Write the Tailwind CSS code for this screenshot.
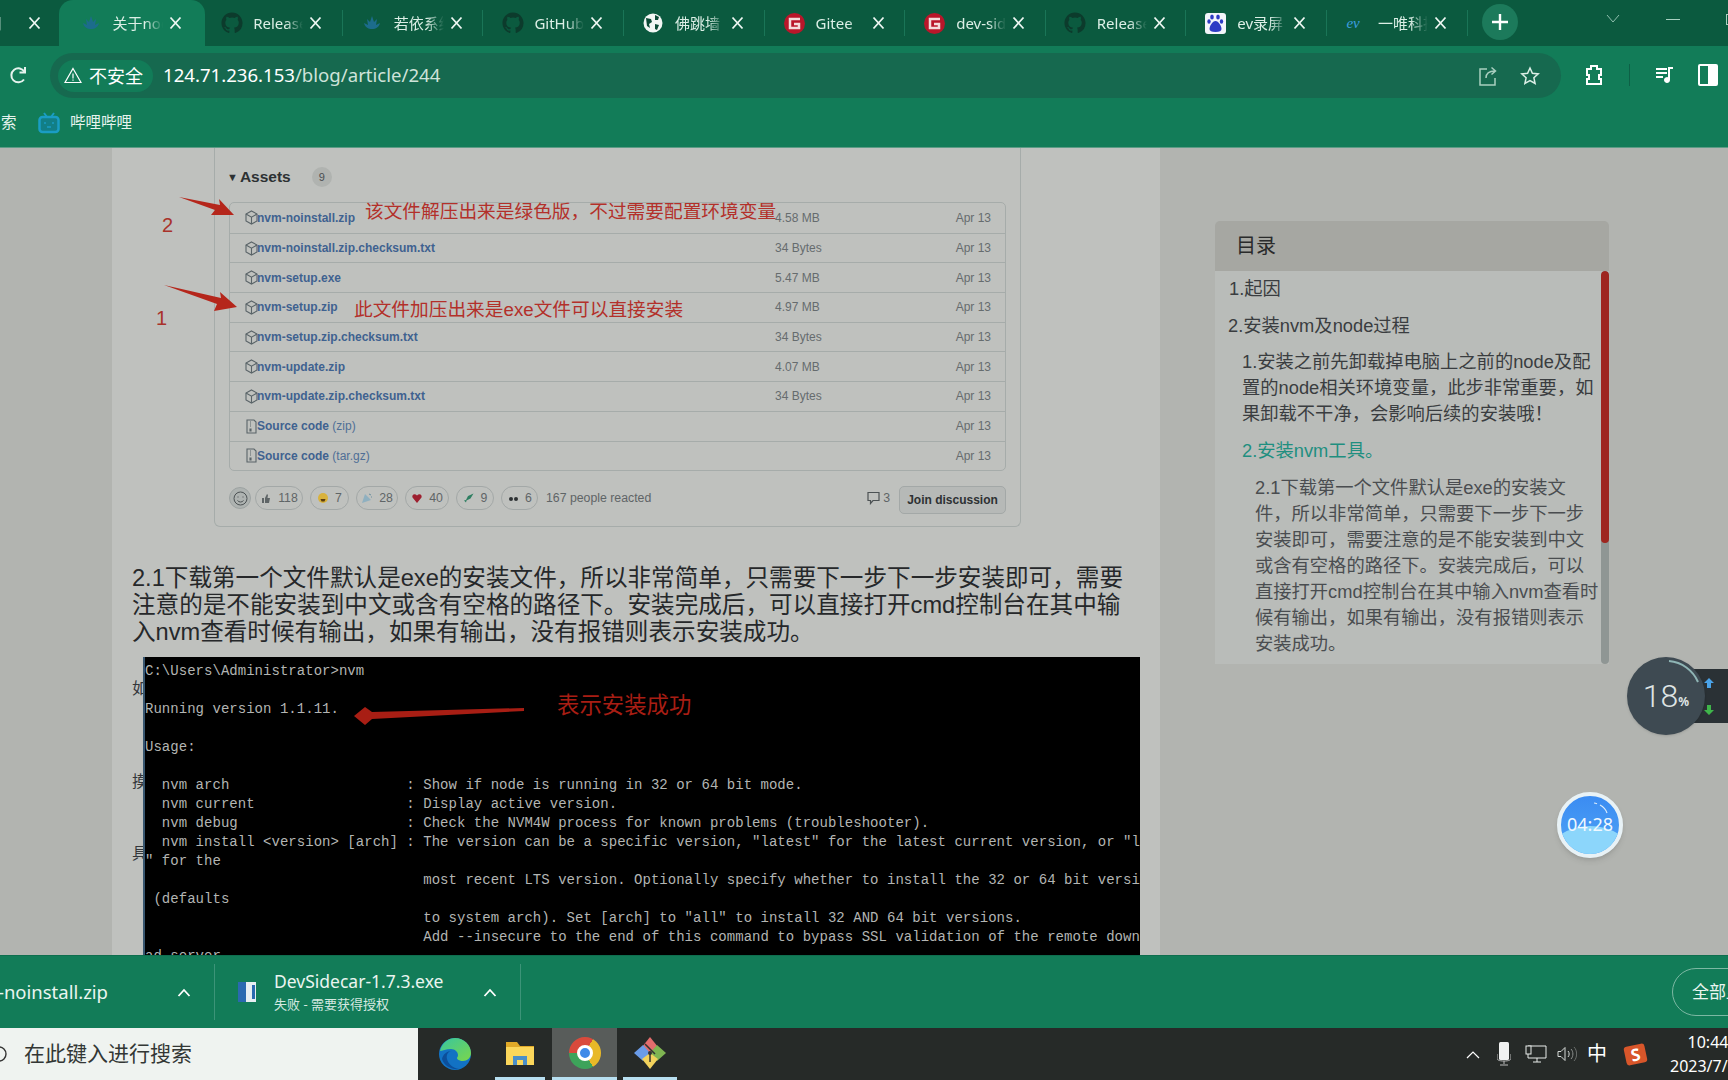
<!DOCTYPE html>
<html lang="zh-CN">
<head>
    <meta charset="UTF-8">
    <meta name="viewport" content="width=device-width, initial-scale=1.0">
    <title>关于nvm</title>
    <script src="https://cdn.jsdelivr.net/npm/@tailwindcss/browser@4"></script>
</head>
<body class="bg-[#b2b4b0]">
<div class="relative w-[1728px] h-[1080px] overflow-hidden flex flex-col [font-family:'Noto_Sans','Noto_Sans_CJK_SC',sans-serif]">

    <!-- Tab strip -->
    <div class="h-[46px] shrink-0 flex bg-[#0b5a3f] text-[#dcefe6] text-[15px]">
        <div id="tabs" class="flex ml-[-79px] shrink-0"></div>
        <div class="ml-[14px] mt-[4px] w-[36px] h-[36px] shrink-0 rounded-full bg-[#1c7a5b] flex items-center justify-center">
            <svg width="18" height="18" viewBox="0 0 18 18" stroke="#fff" stroke-width="2.4"><path d="M9 1v16M1 9h16"/></svg>
        </div>
        <svg class="ml-[88px] mt-[14px] shrink-0" width="14" height="10" viewBox="0 0 14 10" fill="none" stroke="#8fbfae" stroke-width="1"><path d="M1 1l6 7 6-7"/></svg>
        <div class="ml-[46px] mt-[19px] w-[14px] h-[1px] shrink-0 bg-[#a8d0c0]"></div>
        <div class="ml-[46px] mt-[14px] w-[14px] h-[11px] shrink-0 border border-[#a8d0c0]"></div>
    </div>

    <!-- Toolbar -->
    <div class="h-[52px] shrink-0 flex items-end bg-[#127c58] text-white">
        <svg class="ml-[9px] mb-[13px] shrink-0" width="18" height="20" viewBox="0 0 18 20" fill="none" stroke="#e6f3ee" stroke-width="2"><path d="M15 14.5a7 7 0 1 1 .5-7.5"/><path d="M16 2v5.5h-5.500" /></svg>
        <div class="ml-[23px] w-[1511px] h-[45px] shrink-0 rounded-full bg-[#16694f] flex items-center">
            <div class="ml-[8px] w-[95px] h-[32px] rounded-full bg-[#127c58] flex items-center pl-[6px] gap-[7px]">
                <svg width="18" height="17" viewBox="0 0 18 17" fill="none" stroke="#fff" stroke-width="1.200"><path d="M9 1.500L17 15.500H1z"/><path d="M9 6.500v5M9 12.500v1.200"/></svg>
                <span class="text-[18px] leading-none">不安全</span>
            </div>
            <span class="ml-[10px] text-[18.600px] leading-none">124.71.236.153<span class="text-[#cfe3da]">/blog/article/244</span></span>
            <svg class="ml-auto" width="20" height="22" viewBox="0 0 20 22" fill="none" stroke="#a9cfc0" stroke-width="1.500"><path d="M9 4H2v16h15v-7"/><path d="M8 13c0-5 3-7 9-7M13.500 2.500L17.500 6l-4 3.500"/></svg>
            <svg class="ml-[22px] mr-[21px]" width="20" height="20" viewBox="0 0 20 20" fill="none" stroke="#dcefe6" stroke-width="1.500"><path d="M10 2l2.400 5.300 5.800.6-4.300 3.900 1.200 5.700L10 14.600 4.900 17.500l1.200-5.700L1.800 7.900l5.800-.6z"/></svg>
        </div>
        <svg class="ml-[23px] mb-[12px] shrink-0" width="20" height="22" viewBox="0 0 20 22" fill="none" stroke="#fff" stroke-width="2"><path d="M3 5h4V2h6v3h4v6h-2v4h2v5H3v-5h2v-4H3z"/></svg>
        <div class="ml-[25px] mb-[12px] w-[1px] h-[22px] shrink-0 bg-[#0d6046]"></div>
        <svg class="ml-[26px] mb-[14px] shrink-0" width="18" height="18" viewBox="0 0 18 18" fill="#fff"><path d="M0 2h11v2H0zM0 6h11v2H0zM0 10h7v2H0z"/><path d="M12 1h5v2h-3v11a3 3 0 1 1-2-2.800z"/></svg>
        <div class="ml-[24px] mb-[12px] w-[20px] h-[22px] shrink-0 rounded-[2px] border-[2px] border-white flex justify-end">
            <div class="w-[8px] bg-white"></div>
        </div>
    </div>

    <!-- Bookmarks bar -->
    <div class="h-[50px] shrink-0 flex items-center bg-[#127c58] text-[#e6f3ee] text-[15.500px] border-b border-[#5c9c86]">
        <span class="ml-[1px] w-[16px]">索</span>
        <svg class="ml-[21px]" width="22" height="22" viewBox="0 0 22 22" fill="none"><path d="M6 1l3 4M16 1l-3 4" stroke="#1a9dc4" stroke-width="2"/><rect x="1.500" y="5" width="19" height="15" rx="3" fill="#127f86" stroke="#1a9dc4" stroke-width="2.500"/><path d="M7 10v2M15 10v2M9 15h4" stroke="#1a9dc4" stroke-width="1.500"/></svg>
        <span class="ml-[10px]">哔哩哔哩</span>
    </div>

    <!-- Page area -->
    <div class="h-[807px] shrink-0 flex overflow-hidden bg-[#b2b4b0] [font-family:'Liberation_Sans','Noto_Sans_CJK_SC',sans-serif]">
        <div class="ml-[112px] w-[1048px] shrink-0 bg-[#bfc1be]">
            <!-- Release card -->
            <div class="ml-[102px] w-[807px] h-[379px] border-x border-b border-[#a6acaa] rounded-b-[6px] px-[14px] pt-[17px]">
                <div class="h-[24px] flex items-center text-[#2d3133]">
                    <span class="text-[11px] ml-[-2px] mr-[2px]">▼</span>
                    <span class="text-[15.500px] font-semibold">Assets</span>
                    <span class="ml-[21px] w-[20px] h-[20px] rounded-full bg-[#b0b3b0] text-[11px] flex items-center justify-center text-[#4a4f50]">9</span>
                </div>
                <div id="assets" class="mt-[13px] border border-[#a6acaa] rounded-[5px]"></div>
                <div class="mt-[13px] h-[28px] flex items-center text-[12.300px] text-[#5f6567]">
                    <div class="w-[22px] h-[22px] rounded-full bg-[#aeb3b1] border border-[#9da3a2] flex items-center justify-center mr-[4px]">
                        <svg width="15" height="15" viewBox="0 0 15 15" fill="none" stroke="#4c5254"><circle cx="7.500" cy="7.500" r="6.500"/><path d="M4.500 9.500c1.500 2 4.500 2 6 0M5 5.500v1M10 5.500v1"/></svg>
                    </div>
                    <div id="reactions" class="flex gap-[7px]"></div>
                    <span class="ml-[8px] whitespace-nowrap">167 people reacted</span>
                    <svg class="ml-auto" width="13" height="14" viewBox="0 0 13 14" fill="none" stroke="#4c5254" stroke-width="1.200"><path d="M1 1.500h11v8H6l-2.500 3v-3H1z"/></svg>
                    <span class="ml-[3px] mr-[9px]">3</span>
                    <div class="mt-[4px] w-[107px] h-[28px] rounded-[5px] bg-[#b6b9b7] border border-[#a3a8a7] flex items-center justify-center font-semibold text-[12px] text-[#2d3133] whitespace-nowrap">Join discussion</div>
                </div>
            </div>

            <p class="mt-[38px] ml-[20px] text-[23.600px] leading-[27px] text-[#26282a] whitespace-nowrap">
                2.1下载第一个文件默认是exe的安装文件，所以非常简单，只需要下一步下一步安装即可，需要<br>
                注意的是不能安装到中文或含有空格的路径下。安装完成后，可以直接打开cmd控制台在其中输<br>
                入nvm查看时候有输出，如果有输出，没有报错则表示安装成功。
            </p>

            <!-- Terminal screenshot -->
            <pre class="mt-[11px] ml-[31px] w-[997px] h-[310px] overflow-hidden bg-black border-l-2 border-[#38566f] pt-[5px] text-[14px] leading-[19px] tracking-[0.030px] text-[#b3b5b3] [font-family:'Liberation_Mono',monospace]">C:\Users\Administrator>nvm

Running version 1.1.11.

Usage:

  nvm arch                     : Show if node is running in 32 or 64 bit mode.
  nvm current                  : Display active version.
  nvm debug                    : Check the NVM4W process for known problems (troubleshooter).
  nvm install &lt;version> [arch] : The version can be a specific version, "latest" for the latest current version, or "lts" for the
" for the
                                 most recent LTS version. Optionally specify whether to install the 32 or 64 bit version
 (defaults
                                 to system arch). Set [arch] to "all" to install 32 AND 64 bit versions.
                                 Add --insecure to the end of this command to bypass SSL validation of the remote download
ad server.</pre>
        </div>

        <!-- Table of contents -->
        <div class="ml-[55px] mt-[73px] w-[394px] h-[443px] shrink-0 flex flex-col overflow-hidden rounded-t-[5px] text-[#3a3d40]">
            <div class="h-[50px] shrink-0 bg-[#a6a7a2] pl-[21px] flex items-center text-[20px] text-[#2a2b2b]">目录</div>
            <div class="flex-1 flex bg-[#b9bcb9] min-h-0">
                <div class="flex-1 text-[18.300px] leading-[26px] whitespace-nowrap pt-[5px]">
                    <div class="pl-[14px]">1.起因</div>
                    <div class="pl-[13px] mt-[11px]">2.安装nvm及node过程</div>
                    <div class="pl-[27px] mt-[10px]">1.安装之前先卸载掉电脑上之前的node及配<br>置的node相关环境变量，此步非常重要，如<br>果卸载不干净，会影响后续的安装哦！</div>
                    <div class="pl-[27px] mt-[11px] text-[#1f8f80]">2.安装nvm工具。</div>
                    <div class="pl-[40px] mt-[11px] text-[#4a4d50]">2.1下载第一个文件默认是exe的安装文<br>件，所以非常简单，只需要下一步下一步<br>安装即可，需要注意的是不能安装到中文<br>或含有空格的路径下。安装完成后，可以<br>直接打开cmd控制台在其中输入nvm查看时<br>候有输出，如果有输出，没有报错则表示<br>安装成功。</div>
                </div>
                <div class="w-[8px] shrink-0 bg-[#8f9694] rounded-[4px] overflow-hidden">
                    <div class="h-[272px] bg-[#9e2620] rounded-[4px]"></div>
                </div>
            </div>
        </div>
    </div>

    <!-- Download bar -->
    <div class="h-[73px] shrink-0 flex items-center bg-[#127c58] text-[#eaf5f0] border-t border-[#0e6e4e]">
        <div class="w-[108px] shrink-0 overflow-hidden flex justify-end text-[18.500px] whitespace-nowrap"><span class="shrink-0">nvm-noinstall.zip</span></div>
        <svg class="ml-[69px] shrink-0" width="14" height="9" viewBox="0 0 14 9" fill="none" stroke="#fff" stroke-width="1.800"><path d="M1.500 8L7 2l5.500 6"/></svg>
        <div class="ml-[23px] w-[1px] h-[56px] shrink-0 bg-[#3c9478]"></div>
        <div class="ml-[23px] w-[18px] h-[20px] shrink-0 bg-[#e7eef2] flex items-center justify-end border-l-[8px] border-[#2a69b0]"><div class="w-[3px] h-[14px] bg-[#2a69b0] mr-[1px]"></div></div>
        <div class="ml-[18px] w-[209px] shrink-0">
            <div class="text-[17.500px] leading-[24px]">DevSidecar-1.7.3.exe</div>
            <div class="text-[13px] leading-[22px] text-[#d5e9e1]">失败 - 需要获得授权</div>
        </div>
        <svg class="shrink-0" width="14" height="9" viewBox="0 0 14 9" fill="none" stroke="#fff" stroke-width="1.800"><path d="M1.500 8L7 2l5.500 6"/></svg>
        <div class="ml-[23px] w-[1px] h-[56px] shrink-0 bg-[#3c9478]"></div>
        <div class="ml-[1151px] w-[110px] h-[48px] shrink-0 rounded-full border border-[#7cb8a3] pl-[19px] flex items-center text-[17px] whitespace-nowrap">全部显示</div>
    </div>

    <!-- Windows taskbar -->
    <div class="h-[52px] shrink-0 flex bg-[#262a28] text-white">
        <div class="w-[418px] shrink-0 bg-[#eff3f0] flex items-center text-[21px] text-[#333735]">
            <svg class="ml-[-9px]" width="16" height="16" viewBox="0 0 16 16" fill="none" stroke="#333" stroke-width="1.400"><circle cx="8" cy="8" r="7"/></svg>
            <span class="ml-[17px]">在此键入进行搜索</span>
        </div>
        <div class="ml-[4px] w-[65px] shrink-0 flex flex-col items-center">
            <div class="flex-1 flex items-center">
                <svg width="34" height="34" viewBox="0 0 34 34"><defs><linearGradient id="edgeA" x1="0" y1="0" x2="1" y2="1"><stop offset="0" stop-color="#37c6a0"/><stop offset="1" stop-color="#7bd64a"/></linearGradient></defs><circle cx="17" cy="17" r="16" fill="#1272c4"/><path d="M2 14C4 5 11 1 17 1c9 0 16 7 16 15 0 5-4 8-8 8-4 0-6-2-6-3 0-1 1-1 1-3 0-3-3-6-7-6-5 0-9 2-11 2z" fill="url(#edgeA)"/><path d="M14 14c-4 0-6 4-5 8 1 5 6 9 12 10-7 1-15-3-17-10 1-5 5-8 10-8z" fill="#0c4f9b"/></svg>
            </div>
        </div>
        <div class="w-[65px] shrink-0 flex flex-col items-center">
            <div class="flex-1 flex items-center">
                <svg width="30" height="30" viewBox="0 0 30 30"><path d="M1 4h11l3 4h14v19H1z" fill="#e0a928"/><path d="M1 9h28v18H1z" fill="#fbd75b"/><path d="M8 27v-9h14v9h-4v-5h-6v5z" fill="#4a8fc9"/></svg>
            </div>
            <div class="h-[3px] w-[50px] bg-[#b7dff0]"></div>
        </div>
        <div class="w-[65px] shrink-0 flex flex-col items-center bg-[#585c5a]">
            <div class="flex-1 flex items-center">
                <div class="w-[32px] h-[32px] rounded-full bg-[conic-gradient(from_30deg,#e8b928_0deg_120deg,#3da35a_120deg_240deg,#d94a3c_240deg_360deg)] flex items-center justify-center">
                    <div class="w-[16px] h-[16px] rounded-full bg-[#3f8ae8] border-[3px] border-white"></div>
                </div>
            </div>
            <div class="h-[3px] w-full bg-[#b7dff0]"></div>
        </div>
        <div class="w-[65px] shrink-0 flex flex-col items-center">
            <div class="flex-1 flex items-center">
                <svg width="34" height="34" viewBox="0 0 34 34"><path d="M17 1l8 10-8 10-8-10z" fill="#e26d6d"/><path d="M1 17l9-8 7 8-7 8z" fill="#6a9ce8"/><path d="M33 17l-9-8-7 8 7 8z" fill="#7fb552"/><path d="M17 33l-8-10 8-6 8 6z" fill="#f2d25c"/><path d="M12 8l10 10M17 17v9" stroke="#333" stroke-width="1.500"/><circle cx="17" cy="17" r="2" fill="#333"/></svg>
            </div>
            <div class="h-[3px] w-[54px] bg-[#b7dff0]"></div>
        </div>
        <svg class="ml-[784px] self-center shrink-0" width="14" height="9" viewBox="0 0 14 9" fill="none" stroke="#fff" stroke-width="1.200"><path d="M1 8l6-6 6 6"/></svg>
        <svg class="ml-[17px] self-center shrink-0" width="14" height="24" viewBox="0 0 14 24"><rect x="2" y="0" width="10" height="18" rx="1.500" fill="#f0f2f1"/><path d="M0 12v4c0 2 2 3 7 3s7-1 7-3v-4M7 19v3M3 23h8" fill="none" stroke="#bbb" stroke-width="1"/></svg>
        <svg class="ml-[14px] self-center shrink-0" width="22" height="18" viewBox="0 0 22 18" fill="none" stroke="#e8ecea"><path d="M3 1h18v12H3zM8 17h8M12 13v4"/><rect x="1" y="1" width="5" height="8" fill="#262a28"/></svg>
        <svg class="ml-[10px] self-center shrink-0" width="20" height="16" viewBox="0 0 20 16" fill="none" stroke="#d5d9d7"><path d="M1 5.500h3l4-4v13l-4-4H1z"/><path d="M11 5c1.500 1.500 1.500 4.500 0 6" /><path d="M14 3c2.500 2.500 2.500 7.500 0 10" stroke="#8b8f8d"/><path d="M17 1c3.500 3.500 3.500 10.500 0 14" stroke="#6a6e6c"/></svg>
        <span class="ml-[10px] w-[20px] self-center text-[20px] leading-none shrink-0">中</span>
        <div class="ml-[18px] w-[21px] h-[19px] self-center shrink-0 rounded-[3px] rotate-[-12deg] bg-[#d8562a] flex items-center justify-center text-[17px] font-bold leading-none text-white">S</div>
        <div class="ml-[23px] w-[78px] shrink-0 self-center text-center text-[16px] leading-[24px] whitespace-nowrap">10:44<br>2023/7/17</div>
    </div>

    <!-- Red annotations drawn on the screenshots -->
    <svg class="absolute left-0 top-0 pointer-events-none" width="1728" height="955" viewBox="0 0 1728 955">
        <polygon points="179,197 220,205 219,199 234,215 211,215 215,210" fill="#b5261b"/>
        <polygon points="164,285 221,298 220,292 237,307 214,311 217,304" fill="#b5261b"/>
        <polygon points="524,708 372,712 365,707 354,716 365,725 372,719 524,711" fill="#a81e14"/>
    </svg>
    <span class="absolute left-[365px] top-[197px] text-[18.700px] leading-[28px] text-[#b3302a] whitespace-nowrap">该文件解压出来是绿色版，不过需要配置环境变量</span>
    <span class="absolute left-[354px] top-[296px] text-[18.700px] leading-[28px] text-[#b3302a] whitespace-nowrap [font-family:'Liberation_Sans','Noto_Sans_CJK_SC',sans-serif]">此文件加压出来是exe文件可以直接安装</span>
    <span class="absolute left-[162px] top-[213px] text-[20px] leading-[24px] text-[#a9322a] [font-family:'Liberation_Sans',sans-serif]">2</span>
    <span class="absolute left-[156px] top-[306px] text-[20px] leading-[24px] text-[#a9322a] [font-family:'Liberation_Sans',sans-serif]">1</span>
    <span class="absolute left-[557px] top-[690px] text-[22.400px] leading-[30px] text-[#a81e14] whitespace-nowrap">表示安装成功</span>

    <!-- Letters showing from behind the terminal -->
    <span class="absolute left-[132px] top-[676px] w-[11px] overflow-hidden text-[16px] leading-[24px] text-[#33363a]">如</span>
    <span class="absolute left-[132px] top-[769px] w-[11px] overflow-hidden text-[16px] leading-[24px] text-[#33363a]">摸</span>
    <span class="absolute left-[132px] top-[841px] w-[11px] overflow-hidden text-[16px] leading-[24px] text-[#33363a]">具</span>

    <!-- CPU meter widget -->
    <div class="absolute left-[1688px] top-[669px] w-[60px] h-[54px] bg-[#2a3135] rounded-l-[4px] flex flex-col items-start pl-[16px] justify-around">
        <svg width="10" height="10" viewBox="0 0 10 10" fill="#4aa3e8"><path d="M5 0l5 5H7v5H3V5H0z"/></svg>
        <svg width="10" height="10" viewBox="0 0 10 10" fill="#3fb54a"><path d="M5 10L0 5h3V0h4v5h3z"/></svg>
    </div>
    <div class="absolute left-[1627px] top-[657px] w-[78px] h-[78px] rounded-full bg-[#3e4a52] flex items-center justify-center text-[#dfe4e4] shadow-sm">
        <span class="text-[32px] font-light leading-none [font-family:'Roboto',sans-serif]">18</span><span class="text-[12px] mt-[12px] font-bold">%</span>
    </div>
    <svg class="absolute left-[1627px] top-[657px]" width="78" height="78" viewBox="0 0 78 78" fill="none" stroke="#8fb5b5" stroke-width="2"><path d="M42 4a35 35 0 0 1 29 21"/></svg>

    <!-- Timer widget -->
    <div class="absolute left-[1557px] top-[792px] w-[66px] h-[66px] rounded-full border-[4px] border-[#e8f2f6] shadow-md overflow-hidden bg-linear-to-b from-[#3b8cf2] to-[#4fa3f5] flex items-center justify-center">
        <div class="absolute left-[-12px] right-[-12px] bottom-[-28px] h-[56px] rounded-[50%] bg-[#8cd6fb]"></div>
        <svg class="absolute left-[32px] top-[6px]" width="18" height="14" viewBox="0 0 18 14" fill="none" stroke="#dcecfb" stroke-width="1.200"><path d="M1 1c1 0 2 .3 3 .8M7 3c3 1.500 6 5 7 8"/></svg>
        <span class="relative text-[18px] leading-none text-[#f0f8ff] mb-[2px]">04:28</span>
    </div>
</div>

<script>
    const github = `<svg class="shrink-0" width="22" height="22" viewBox="0 0 24 24" fill="#0c3b2c"><path d="M12 .5C5.650.5.500 5.650.500 12c0 5.080 3.290 9.390 7.860 10.910.580.100.790-.250.790-.560v-2.140c-3.200.700-3.870-1.360-3.870-1.360-.520-1.330-1.280-1.680-1.280-1.680-1.050-.720.080-.700.080-.700 1.160.080 1.770 1.190 1.770 1.190 1.030 1.760 2.700 1.250 3.360.960.100-.750.400-1.250.730-1.540-2.560-.290-5.250-1.280-5.250-5.680 0-1.250.450-2.280 1.180-3.080-.120-.290-.510-1.460.110-3.040 0 0 .970-.310 3.170 1.180a11 11 0 0 1 5.780 0c2.200-1.490 3.170-1.180 3.170-1.180.630 1.580.230 2.750.110 3.040.740.800 1.180 1.830 1.180 3.080 0 4.410-2.690 5.390-5.260 5.670.410.360.780 1.060.780 2.140v3.170c0 .310.210.670.800.560A11.500 11.500 0 0 0 23.500 12C23.500 5.650 18.350.500 12 .500z"/></svg>`;
    const leaf = `<svg class="shrink-0" width="20" height="20" viewBox="0 0 20 20" fill="#1c6c8c"><path d="M10 3l2 6 3-3-1 6 4-2c-1 4-4 6-8 6s-7-2-8-6l4 2-1-6 3 3z"/></svg>`;
    const globe = `<svg class="shrink-0" width="20" height="20" viewBox="0 0 20 20"><circle cx="10" cy="10" r="9.500" fill="#f2f6f4"/><path d="M3 5l5 1 1 3-3 2 1 4-3-2zM12 2l4 2-1 3-3 0zM12 11l4 1-2 5-2-1z" fill="#0c4a36"/></svg>`;
    const gitee = `<div class="shrink-0 w-[21px] h-[21px] rounded-full bg-[#b9162a] flex items-center justify-center"><svg width="13" height="13" viewBox="0 0 13 13" fill="none" stroke="#f4dcdc" stroke-width="2.500"><path d="M12 2H2v9h9V7H6"/></svg></div>`;
    const baidu = `<div class="shrink-0 w-[21px] h-[21px] rounded-[3px] bg-[#f3f5fa] flex items-center justify-center"><svg width="17" height="18" viewBox="0 0 17 18" fill="#2d3bc4"><ellipse cx="5" cy="3" rx="1.800" ry="2.500"/><ellipse cx="11" cy="3" rx="1.800" ry="2.500"/><ellipse cx="2" cy="7.500" rx="1.700" ry="2.200"/><ellipse cx="14.500" cy="7.500" rx="1.700" ry="2.200"/><path d="M8.500 7c3 0 6 5 6 8 0 2-2 3-6 3s-6-1-6-3c0-3 3-8 6-8z"/></svg></div>`;
    const evIcon = `<span class="shrink-0 w-[20px] text-[15px] italic leading-none text-[#3f9fe0] [font-family:'Liberation_Serif',serif]">ev</span>`;

    const tabs = [
        { icon: globe, title: "应用" },
        { icon: leaf, title: "关于nodejs", active: true },
        { icon: github, title: "Release" },
        { icon: leaf, title: "若依系统" },
        { icon: github, title: "GitHub" },
        { icon: globe, title: "佛跳墙" },
        { icon: gitee, title: "Gitee" },
        { icon: gitee, title: "dev-sidecar" },
        { icon: github, title: "Release" },
        { icon: baidu, title: "ev录屏" },
        { icon: evIcon, title: "一唯科技" },
    ];

    const closeIcon = `<svg class="shrink-0 ml-[6px]" width="13" height="14" viewBox="0 0 13 14" stroke="#eef7f3" stroke-width="1.800"><path d="M1.500 1.500l10 11M11.500 1.500l-10 11"/></svg>`;

    document.getElementById("tabs").innerHTML = tabs.map((tab, i) => {
        let box = "w-[140.600px] pl-[19px] h-[26px] self-center border-r border-[#1a7557]";
        if (i === 0) box = "w-[140.600px] pl-[19px] h-[26px] self-center";
        // the active tab flares out a little past its neighbours
        if (tab.active) box = "w-[146.600px] mx-[-3px] pl-[22px] h-full rounded-t-[14px] bg-[#127c58]";
        return `
            <div class="shrink-0 flex items-center ${box}">
                <div class="${i === 0 ? "invisible" : ""} w-[21px] shrink-0 flex justify-center">${tab.icon}</div>
                <div class="ml-[11px] w-[50px] shrink-0 overflow-hidden whitespace-nowrap [mask-image:linear-gradient(to_right,black_65%,transparent)]">${tab.title}</div>
                ${closeIcon}
            </div>`;
    }).join("");

    const pkgIcon = `<svg class="shrink-0" width="13" height="15" viewBox="0 0 13 15" fill="none" stroke="#5a6468" stroke-width="1.100"><path d="M6.500 1L12 4v7l-5.500 3L1 11V4z"/><path d="M1 4l5.500 3.200L12 4M6.500 7.200V14"/></svg>`;
    const zipIcon = `<svg class="shrink-0" width="13" height="15" viewBox="0 0 13 15" fill="none" stroke="#5a6468" stroke-width="1.100"><path d="M2 1h7l2 2v11H2z"/><path d="M5 3h1M5 5h1M5 7h1M5 10h1v2H5z"/></svg>`;

    const assets = [
        { name: "nvm-noinstall.zip", size: "4.58 MB" },
        { name: "nvm-noinstall.zip.checksum.txt", size: "34 Bytes" },
        { name: "nvm-setup.exe", size: "5.47 MB" },
        { name: "nvm-setup.zip", size: "4.97 MB" },
        { name: "nvm-setup.zip.checksum.txt", size: "34 Bytes" },
        { name: "nvm-update.zip", size: "4.07 MB" },
        { name: "nvm-update.zip.checksum.txt", size: "34 Bytes" },
        { name: "Source code", extra: "(zip)", size: "" },
        { name: "Source code", extra: "(tar.gz)", size: "" },
    ];

    document.getElementById("assets").innerHTML = assets.map((a, i) => `
        <div class="h-[29.700px] flex items-center pl-[15px] pr-[14px] text-[12px] ${i ? "border-t border-[#a6acaa]" : ""}">
            ${a.extra ? zipIcon : pkgIcon}
            <span class="ml-[-1px] w-[518px] shrink-0 font-semibold text-[#3f6290] whitespace-nowrap">${a.name}${a.extra ? ` <span class="font-normal text-[#4f6f96]">${a.extra}</span>` : ""}</span>
            <span class="text-[#666c6e]">${a.size}</span>
            <span class="ml-auto text-[#666c6e]">Apr 13</span>
        </div>`).join("");

    const reactions = [
        { w: "w-[48px]", n: 118, icon: `<path d="M2 6h2v5H2zM5 6l2-4 1 1-.500 3H10l-1 5H5z" fill="#5f6567"/>` },
        { w: "w-[39px]", n: 7, icon: `<circle cx="6" cy="6" r="5" fill="#d9b23c"/><path d="M3.500 7h5l-1 2.500h-3z" fill="#5a3c10"/>` },
        { w: "w-[42px]", n: 28, icon: `<path d="M1 11L4 2l6 6z" fill="#8fb0c0"/><path d="M8 2l2 1M10 5l1 0" stroke="#6a8fa0"/>` },
        { w: "w-[44px]", n: 40, icon: `<path d="M6 11L1.500 5.500C.500 3 3.500 1 6 3.500 8.500 1 11.500 3 10.500 5.500z" fill="#9e2030"/>` },
        { w: "w-[38px]", n: 9, icon: `<path d="M10.500 1.500L5 4 3 8l-2 .500 1 1 1 1 .500-2 4-2z" fill="#2f7f62"/>` },
        { w: "w-[37px]", n: 6, icon: `<circle cx="4" cy="7" r="2" fill="#2d3133"/><circle cx="9" cy="7" r="2" fill="#2d3133"/>` },
    ];

    document.getElementById("reactions").innerHTML = reactions.map(r => `
        <div class="${r.w} h-[24px] rounded-full border border-[#a3a8a7] flex items-center justify-center gap-[6px] whitespace-nowrap">
            <svg width="12" height="12" viewBox="0 0 12 12" fill="none">${r.icon}</svg><span>${r.n}</span>
        </div>`).join("");
</script>
</body>
</html>
